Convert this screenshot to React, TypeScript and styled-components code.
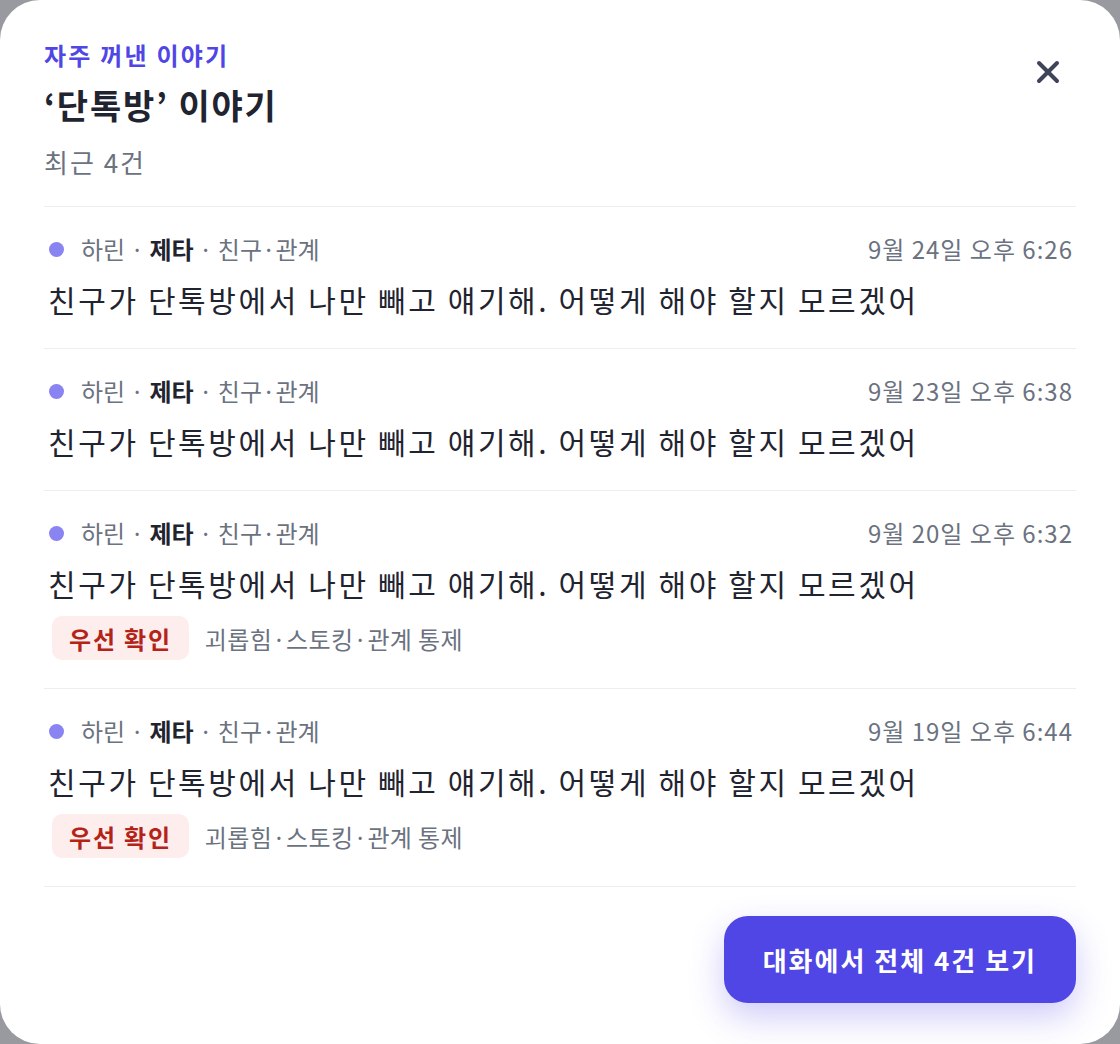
import React from 'react';
import styled, { createGlobalStyle } from 'styled-components';

const INDIGO = '#4f46e5';
const DARK_TEXT = '#1f2430';
const GRAY_TEXT = '#6b7280';
const DIVIDER = '#eceef2';

type Story = {
  id: number;
  speaker: string;
  character: string;
  category: string;
  date: string;
  text: string;
  flag?: { label: string; topic: string };
};

const STORIES: Story[] = [
  {
    id: 1,
    speaker: '하린',
    character: '제타',
    category: '친구·관계',
    date: '9월 24일 오후 6:26',
    text: '친구가 단톡방에서 나만 빼고 얘기해. 어떻게 해야 할지 모르겠어',
  },
  {
    id: 2,
    speaker: '하린',
    character: '제타',
    category: '친구·관계',
    date: '9월 23일 오후 6:38',
    text: '친구가 단톡방에서 나만 빼고 얘기해. 어떻게 해야 할지 모르겠어',
  },
  {
    id: 3,
    speaker: '하린',
    character: '제타',
    category: '친구·관계',
    date: '9월 20일 오후 6:32',
    text: '친구가 단톡방에서 나만 빼고 얘기해. 어떻게 해야 할지 모르겠어',
    flag: { label: '우선 확인', topic: '괴롭힘·스토킹·관계 통제' },
  },
  {
    id: 4,
    speaker: '하린',
    character: '제타',
    category: '친구·관계',
    date: '9월 19일 오후 6:44',
    text: '친구가 단톡방에서 나만 빼고 얘기해. 어떻게 해야 할지 모르겠어',
    flag: { label: '우선 확인', topic: '괴롭힘·스토킹·관계 통제' },
  },
];

export default function App() {
  return (
    <>
      <GlobalStyle />
      <Backdrop>
        <Sheet>
          <Header>
            <HeaderText>
              <Eyebrow>자주 꺼낸 이야기</Eyebrow>
              <Title>‘단톡방’ 이야기</Title>
              <Subtitle>최근 4건</Subtitle>
            </HeaderText>
            <CloseButton aria-label="닫기">
              <svg width="24" height="24" viewBox="0 0 24 24" fill="none">
                <path
                  d="M3 3L21 21M21 3L3 21"
                  stroke="#3d4556"
                  strokeWidth="4"
                  strokeLinecap="round"
                />
              </svg>
            </CloseButton>
          </Header>

          <List>
            {STORIES.map((story) => (
              <Row key={story.id}>
                <MetaRow>
                  <MetaLeft>
                    <Dot />
                    <span>
                      {story.speaker} · <Strong>{story.character}</Strong> ·{' '}
                      {story.category}
                    </span>
                  </MetaLeft>
                  <DateText>{story.date}</DateText>
                </MetaRow>
                <Body>{story.text}</Body>
                {story.flag && (
                  <FlagRow>
                    <FlagBadge>{story.flag.label}</FlagBadge>
                    <FlagTopic>{story.flag.topic}</FlagTopic>
                  </FlagRow>
                )}
              </Row>
            ))}
          </List>

          <Footer>
            <PrimaryButton>대화에서 전체 4건 보기</PrimaryButton>
          </Footer>
        </Sheet>
      </Backdrop>
    </>
  );
}

const GlobalStyle = createGlobalStyle`
  html, body {
    margin: 0;
    padding: 0;
    background: #989aa0;
  }
  body {
    font-family: 'Noto Sans CJK KR', 'Noto Sans', sans-serif;
    -webkit-font-smoothing: antialiased;
  }
  * {
    box-sizing: border-box;
  }
`;

const Backdrop = styled.div`
  width: 1120px;
  height: 1044px;
  overflow: hidden;
  background: #989aa0;
`;

const Sheet = styled.div`
  display: flex;
  flex-direction: column;
  width: 1120px;
  height: 1044px;
  background: #ffffff;
  border-radius: 40px;
  padding: 38px 44px 0;
`;

const Header = styled.div`
  display: flex;
  flex-direction: row;
  justify-content: space-between;
  align-items: flex-start;
  padding-bottom: 26px;
  border-bottom: 1px solid ${DIVIDER};
`;

const HeaderText = styled.div`
  display: flex;
  flex-direction: column;
`;

const Eyebrow = styled.div`
  font-size: 24px;
  line-height: 34px;
  font-weight: 700;
  letter-spacing: 2.2px;
  color: ${INDIGO};
`;

const Title = styled.h1`
  margin: 11px 0 0;
  font-size: 34px;
  line-height: 44px;
  font-weight: 700;
  letter-spacing: 1.8px;
  color: ${DARK_TEXT};
`;

const Subtitle = styled.div`
  margin-top: 17px;
  font-size: 26px;
  line-height: 36px;
  letter-spacing: 2px;
  color: ${GRAY_TEXT};
`;

const CloseButton = styled.button`
  display: flex;
  align-items: center;
  justify-content: center;
  width: 56px;
  height: 56px;
  margin-top: 6px;
  padding: 0;
  border: none;
  background: transparent;
  cursor: pointer;
`;

const List = styled.div`
  display: flex;
  flex-direction: column;
`;

const Row = styled.div`
  display: flex;
  flex-direction: column;
  padding: 25px 4px 28px 4px;
  border-bottom: 1px solid ${DIVIDER};
`;

const MetaRow = styled.div`
  display: flex;
  flex-direction: row;
  justify-content: space-between;
  align-items: center;
  font-size: 24px;
  line-height: 34px;
  color: ${GRAY_TEXT};
`;

const MetaLeft = styled.div`
  display: flex;
  flex-direction: row;
  align-items: center;
  gap: 17px;
`;

const Dot = styled.span`
  width: 15px;
  height: 15px;
  border-radius: 50%;
  background: #8a84f2;
  margin-left: 1px;
`;

const Strong = styled.b`
  font-weight: 700;
  color: ${DARK_TEXT};
`;

const DateText = styled.span`
  white-space: nowrap;
  letter-spacing: 1px;
  margin-right: -1px;
`;

const Body = styled.p`
  margin: 12px 0 0;
  font-size: 30px;
  line-height: 42px;
  letter-spacing: 2.6px;
  color: ${DARK_TEXT};
`;

const FlagRow = styled.div`
  display: flex;
  flex-direction: row;
  align-items: center;
  gap: 16px;
  margin-top: 12px;
  padding-left: 4px;
`;

const FlagBadge = styled.span`
  display: inline-flex;
  align-items: center;
  height: 44px;
  padding: 0 17px;
  border-radius: 10px;
  background: #fdeded;
  color: #b42318;
  font-size: 24px;
  font-weight: 700;
  letter-spacing: 1.8px;
`;

const FlagTopic = styled.span`
  font-size: 24px;
  letter-spacing: 0.4px;
  color: ${GRAY_TEXT};
`;

const Footer = styled.div`
  display: flex;
  flex-direction: row;
  justify-content: flex-end;
  padding-top: 29px;
`;

const PrimaryButton = styled.button`
  height: 87px;
  padding: 0 39px;
  border: none;
  border-radius: 24px;
  background: ${INDIGO};
  color: #ffffff;
  font-family: 'Noto Sans CJK KR', 'Noto Sans', sans-serif;
  font-size: 26px;
  font-weight: 700;
  letter-spacing: 2px;
  box-shadow: 0 14px 34px rgba(79, 70, 229, 0.28);
  cursor: pointer;
`;
